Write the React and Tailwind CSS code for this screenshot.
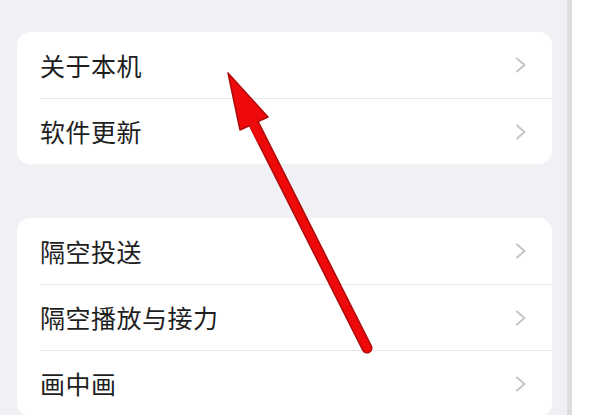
const groups = [
  ['关于本机', '软件更新'],
  ['隔空投送', '隔空播放与接力', '画中画'],
]

const Chevron = () => (
  <svg width="12" height="16" viewBox="0 0 12 16" className="shrink-0">
    <polyline points="2,1.5 9.5,8 2,14.5" fill="none" stroke="#c4c4c9" strokeWidth="2" strokeLinecap="round" strokeLinejoin="round" />
  </svg>
)

const App = () => {
  return (
    <div className="relative w-[611px] h-[415px] overflow-hidden flex bg-white" style={{ fontFamily: '"Noto Sans CJK SC", "Noto Sans", sans-serif' }}>
      {/* Settings list */}
      <div className="w-[567px] h-full bg-[#f0f0f5] pt-[32px] pl-[17px] pr-[15px] flex flex-col gap-[54px]">
        {groups.map((rows, gi) => (
          <div key={gi} className="bg-white rounded-[13px] overflow-hidden shrink-0">
            {rows.map((label, i) => (
              <div key={label} className="h-[66px] pl-[23px] flex flex-col">
                {i > 0 && <div className="h-px bg-[#e6e6ea]" />}
                <div className="flex-1 flex items-center justify-between pr-[25px]">
                  <span className="text-[25px] leading-none text-[#1e1e1e] tracking-[0.5px]">{label}</span>
                  <Chevron />
                </div>
              </div>
            ))}
          </div>
        ))}
      </div>
      <div className="w-[5px] h-full bg-[#dddde2]" />

      {/* Red annotation arrow */}
      <svg className="absolute inset-0 pointer-events-none" width="611" height="415" viewBox="0 0 611 415">
        <line x1="252" y1="120" x2="367" y2="348" stroke="#b00a0a" strokeWidth="11" strokeLinecap="round" />
        <line x1="252" y1="120" x2="367" y2="348" stroke="#ee0a0a" strokeWidth="8" strokeLinecap="round" />
        <polygon
          points="228,73 268,117 240,130"
          fill="#ee0a0a"
          stroke="#b00a0a"
          strokeWidth="1.5"
          strokeLinejoin="round"
        />
        <line x1="252" y1="122" x2="262" y2="142" stroke="#ee0a0a" strokeWidth="8" />
      </svg>
    </div>
  )
}

export default App
